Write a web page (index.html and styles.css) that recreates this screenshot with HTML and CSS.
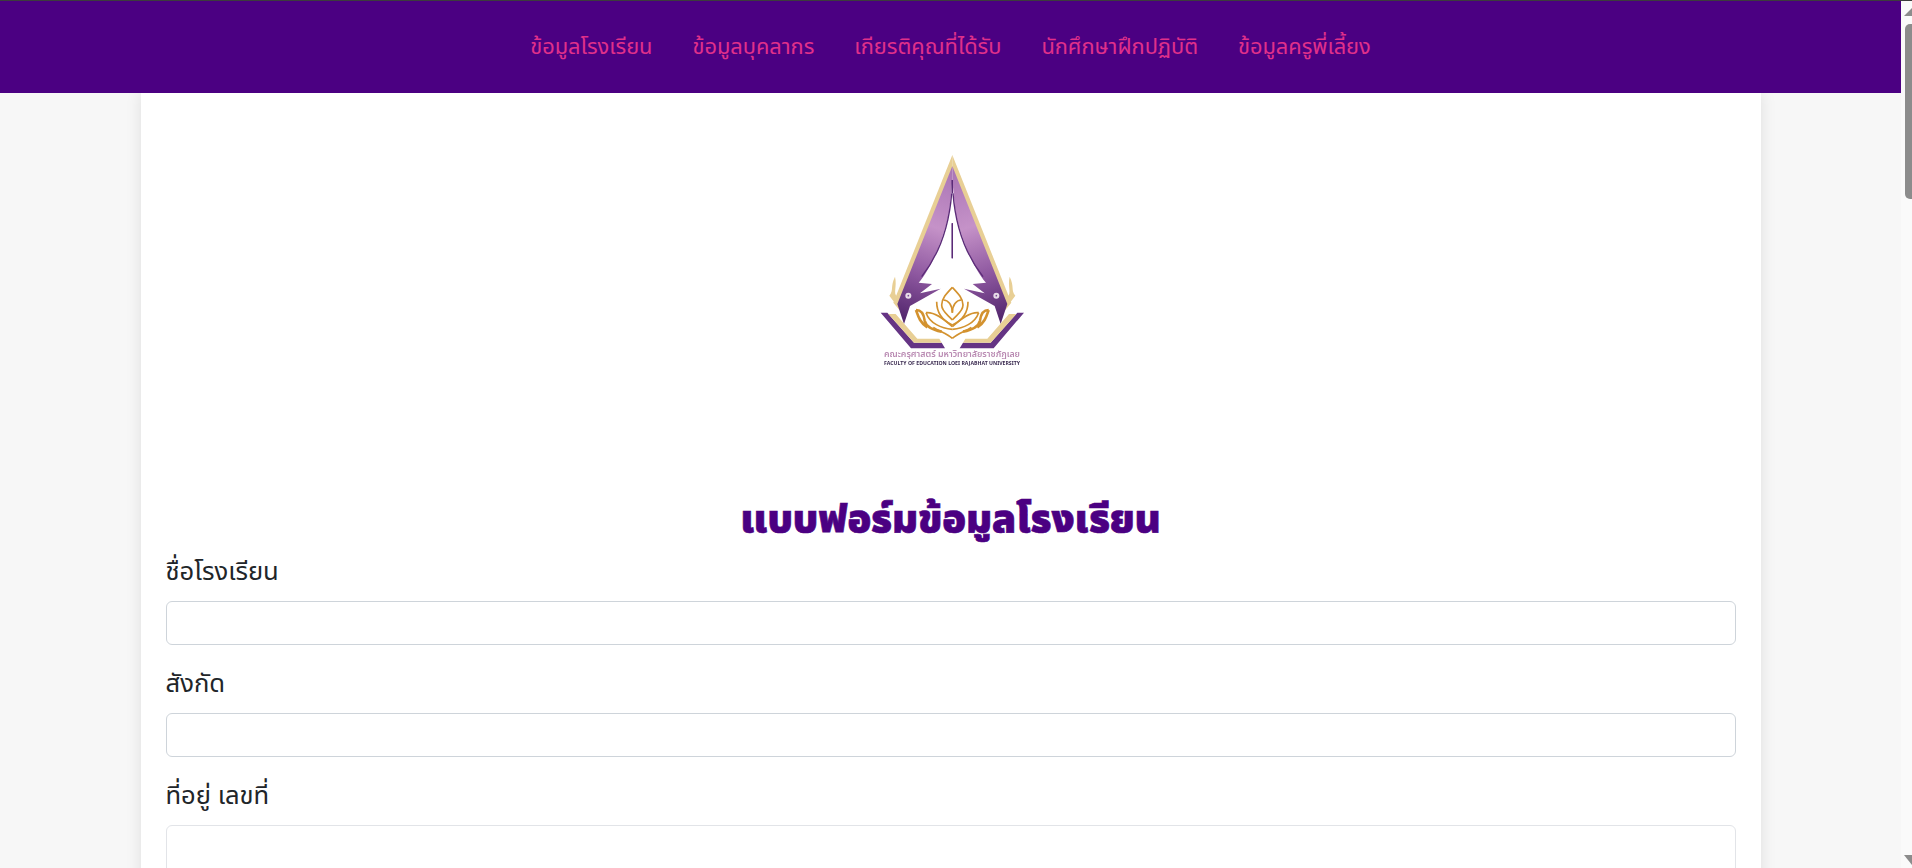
FILE: index.html
```html
<!DOCTYPE html>
<html lang="th">
<head>
<meta charset="utf-8">
<title>แบบฟอร์มข้อมูลโรงเรียน</title>
<link rel="stylesheet" href="styles.css">
</head>
<body>
<div class="page">
  <nav class="topnav">
    <a href="#">ข้อมูลโรงเรียน</a>
    <a href="#">ข้อมูลบุคลากร</a>
    <a href="#">เกียรติคุณที่ได้รับ</a>
    <a href="#">นักศึกษาฝึกปฏิบัติ</a>
    <a href="#">ข้อมูลครูพี่เลี้ยง</a>
  </nav>
  <main class="card">
    <svg class="logo" viewBox="-12 0 690 750" role="img" aria-label="โลโก้คณะครุศาสตร์">
      <defs>
        <linearGradient id="wing" gradientUnits="userSpaceOnUse" x1="337" y1="108" x2="185" y2="560">
          <stop offset="0" stop-color="#a873b4"/>
          <stop offset="0.4" stop-color="#c592c8"/>
          <stop offset="0.72" stop-color="#8d579f"/>
          <stop offset="1" stop-color="#55286f"/>
        </linearGradient>
        <g id="half">
          <path class="gold" d="M337 75 L160 518 L178 540 L337 112 Z"/>
          <path class="gold" d="M165 440 C150 470 162 480 148 497 L165 520 L172 500 C158 490 172 470 165 440 Z"/>
          <path fill="url(#wing)" d="M337 108 L172 522 L192 582 L210 528 L302 476 L240 490 L276 462 L236 458 C270 420 305 340 325 260 C330 230 333 190 337 150 Z"/>
          <path class="ink" d="M335 190 C328 280 300 370 245 440"/>
          <path class="ink" d="M337 150 L337 190 M337 280 L337 385"/>
          <circle cx="205" cy="497" r="9" fill="#e8dce8"/>
          <circle cx="205" cy="497" r="2.5" fill="#7b4a93"/>
          <path fill="#653484" d="M122 548 L142 548 L222 638 L305 638 L315 655 L213 655 Z"/>
          <path class="gold" d="M145 552 L167 552 L232 626 L298 626 L305 638 L222 638 Z"/>
          <path class="lotus" d="M337 472 C320 490 305 505 305 525 C305 545 325 555 337 570"/>
          <path class="lotus" d="M310 510 C325 510 337 525 337 548 M290 515 C290 545 305 570 337 585"/>
          <path class="lotus" d="M258 548 C280 545 310 565 337 590 M258 548 C269 580 304 595 337 598"/>
          <path class="lotus" d="M280 592 C300 605 320 610 337 625"/>
          <path class="naga" d="M228 540 C245 540 252 555 254 572 C258 590 280 600 305 605 M228 540 C235 560 240 578 262 592"/>
        </g>
      </defs>
      <use href="#half"/>
      <use href="#half" transform="translate(674 0) scale(-1 1)"/>
      <text class="logo-th" x="132" y="682" textLength="408" lengthAdjust="spacingAndGlyphs">คณะครุศาสตร์ มหาวิทยาลัยราชภัฏเลย</text>
      <text class="logo-en" x="132" y="706" textLength="408" lengthAdjust="spacingAndGlyphs">FACULTY OF EDUCATION LOEI RAJABHAT UNIVERSITY</text>
    </svg>
    <h1 class="title">แบบฟอร์มข้อมูลโรงเรียน</h1>
    <form class="form">
      <label class="lbl">ชื่อโรงเรียน</label>
      <input class="field" type="text">
      <label class="lbl">สังกัด</label>
      <input class="field" type="text">
      <label class="lbl">ที่อยู่ เลขที่</label>
      <textarea class="field area"></textarea>
    </form>
  </main>
</div>
<aside class="scrollbar" aria-hidden="true">
  <span class="arrow arrow-up"></span>
  <span class="thumb"></span>
  <span class="arrow arrow-down"></span>
</aside>
</body>
</html>
```
FILE: styles.css
```css
html, body { margin: 0; height: 100%; overflow: hidden; }
body { box-sizing: border-box; display: flex; border-top: 1px solid #3c3c3c; background: #f7f7f7; font-family: "Noto Sans Thai", "Noto Sans", "Open Sans", sans-serif; }
.page { flex: 1; min-width: 0; overflow: hidden; }
.scrollbar { flex: none; width: 11px; display: flex; flex-direction: column; align-items: flex-end; background: #fafafa; }
.thumb { width: 7px; height: 175px; margin-top: 8px; border-radius: 5px 0 0 5px; background: #8c8c8c; }
.arrow { width: 8px; background: #8c8c8c; }
.arrow-up { height: 8px; margin-top: 7px; clip-path: polygon(100% 0, 100% 100%, 0 100%); }
.arrow-down { height: 10px; margin-top: auto; margin-bottom: 3px; clip-path: polygon(0 0, 100% 0, 100% 100%); }
.topnav { position: relative; z-index: 1; box-sizing: border-box; height: 92px; background: #4b0082; display: flex; justify-content: center; align-items: center; gap: 40px; }
.topnav a { color: #e0308a; font-size: 21.8px; text-decoration: none; }
.card { box-sizing: border-box; width: 1620px; margin: 0 auto; padding: 37px 25px 25px; background: #fff; box-shadow: 0 0 15px rgba(0, 0, 0, 0.1); }
.logo { display: block; width: 230px; height: 250px; margin: 0 auto; filter: blur(0.6px); }
.gold { fill: #e8cf95; }
.ink { fill: none; stroke: #5b2b78; stroke-width: 4; }
.lotus { fill: none; stroke: #d3922f; stroke-width: 5; }
.naga { fill: none; stroke: #d3922f; stroke-width: 8; }
.logo-th { font-size: 26px; fill: #b98ab2; font-weight: 600; }
.logo-en { font-size: 15px; fill: #3a2a50; font-weight: 700; }
.title { margin: 110px 0 3px; color: #4b0082; font-size: 39.2px; font-weight: 900; line-height: 60px; text-align: center; -webkit-text-stroke: 0.6px #4b0082; }
.form { display: flex; flex-direction: column; }
.lbl { height: 40px; margin-bottom: 8px; font-size: 25.6px; line-height: 40px; color: #212529; }
.field { display: block; width: 100%; height: 44px; margin: 0 0 20px; box-sizing: border-box; border: 1px solid #ced4da; border-radius: 6px; background: #fff; }
.area { height: 120px; border-color: #e2e4e8; resize: none; }
```
